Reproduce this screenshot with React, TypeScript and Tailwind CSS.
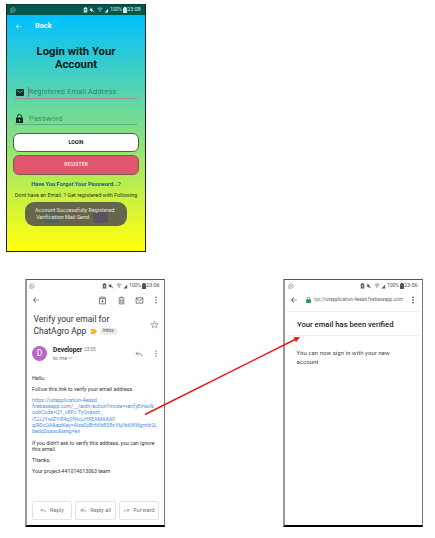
import type { ReactNode } from "react";

function Svg({ className, children, box = "0 0 24 24" }: { className: string; children: ReactNode; box?: string }) {
  return (
    <svg viewBox={box} className={`block shrink-0 ${className}`} fill="currentColor">
      {children}
    </svg>
  );
}

const Whatsapp = ({ className }: { className: string }) => (
  <Svg className={className}>
    <path d="M12 3a9 9 0 0 0-7.700 13.600L3 21l4.500-1.200A9 9 0 1 0 12 3z" fill="none" stroke="currentColor" strokeWidth="2" />
    <path d="M8.500 7.500c-1 1-1 3 2 6s5 3 6 2l-2-2.500-1.500 1c-1-.4-2.500-2-3-3l1-1.500z" />
  </Svg>
);

const Back = ({ className }: { className: string }) => (
  <Svg className={className}>
    <path d="M21 11H6.800l5.600-5.600L11 4l-8 8 8 8 1.400-1.400L6.800 13H21z" />
  </Svg>
);

const Dots = ({ className }: { className: string }) => (
  <Svg className={className} box="8 2 8 20">
    <circle cx="12" cy="5" r="2" />
    <circle cx="12" cy="12" r="2" />
    <circle cx="12" cy="19" r="2" />
  </Svg>
);

const Reply = ({ className }: { className: string }) => (
  <Svg className={className}>
    <path d="M9 5L3 11l6 6M3 11h12q5 0 5 7" fill="none" stroke="currentColor" strokeWidth="2" />
  </Svg>
);

function StatusBar({ className, time }: { className: string; time: string }) {
  return (
    <div className={`flex h-[10px] shrink-0 items-center pr-[4px] ${className}`}>
      <Whatsapp className="size-[6px]" />
      <Svg className="ml-auto h-[6px] w-[5px]" box="2 0 20 24">
        <path fillRule="evenodd" d="M5 4h3V1h8v3h3v18H5zM9 8v3h6V8zM9 14v3h6v-3z" />
      </Svg>
      <Svg className="ml-[1px] size-[6px]">
        <path d="M3 9v6h4l6 5V4L7 9z" />
        <path d="M3 2l18 19" stroke="currentColor" strokeWidth="3" />
      </Svg>
      <Svg className="ml-[2px] size-[6px]">
        <path d="M2 7q10-8 20 0M6 12q6-5 12 0" fill="none" stroke="currentColor" strokeWidth="2.500" />
        <path d="M9 15h6l-3 5z" />
      </Svg>
      <Svg className="ml-[1px] size-[5px]">
        <path d="M2 21L20 3v18z" />
      </Svg>
      <span className="ml-[1px] w-[12px] text-[5.200px] leading-none tracking-[-0.200px]">100%</span>
      <Svg className="ml-[0.500px] h-[6px] w-[4px]" box="0 0 4 6">
        <path d="M0 .8h1V0h2v.8h1V6H0z" />
      </Svg>
      <span className="ml-[0.500px] w-[14px] text-[5.600px] leading-none tracking-[-0.050px]">{time}</span>
    </div>
  );
}

function LoginScreen() {
  return (
    <div className="flex h-[248px] w-[140px] flex-col border-y border-r border-l border-[#222] border-t-[#063d36] bg-linear-to-b/srgb from-[#00bfff] from-4% to-[#ffff10] to-98%">
      <StatusBar className="bg-[#00574b] pl-[3px] text-[#d5ece8]" time="23:08" />
      <div className="flex h-[22px] items-center pl-[8px] text-[#e3fbff]">
        <Back className="size-[7px]" />
        <span className="ml-[13px] text-[7.500px] leading-none font-bold">Back</span>
      </div>
      <h1 className="mt-[8px] text-center text-[11.300px] leading-[13px] font-bold text-[#07191c]">
        Login with Your
        <br />
        Account
      </h1>
      <div className="mt-[14px] ml-[8px] flex h-[14px] w-[122px] items-center border-b border-[#a086a0] pt-[1px]">
        <Svg className="ml-[0.500px] h-[7px] w-[8px] text-[#102b2c]" box="0 0 16 14">
          <path d="M2 0h12q2 0 2 2v10q0 2-2 2H2q-2 0-2-2V2Q0 0 2 0z" />
          <path d="M2 3l6 4 6-4" fill="none" stroke="#4ad4ba" strokeWidth="1.500" />
        </Svg>
        <span className="ml-[4px] h-[10px] w-px bg-[#8a749d]" />
        <span className="text-[7.500px] leading-none tracking-[0.100px] text-[#318279]">Registered Email Address</span>
      </div>
      <div className="mt-[10px] ml-[8px] flex h-[16px] w-[122px] items-center border-b border-[#60ad82] pt-[4px]">
        <Svg className="ml-[1px] h-[9px] w-[7px] text-[#112b20]" box="0 0 14 18">
          <path d="M3 7V5a4 4 0 0 1 8 0v2" fill="none" stroke="currentColor" strokeWidth="2" />
          <path fillRule="evenodd" d="M0 7h14v11H0zM7 11a1.700 1.700 0 1 0 .1 0z" />
        </Svg>
        <span className="ml-[6px] text-[7.500px] leading-none tracking-[0.050px] text-[#438a67]">Password</span>
      </div>
      <div className="mx-[6px] mt-[8px] flex h-[19px] items-center justify-center rounded-[6px] border border-[#47644d] bg-white text-[5.200px] font-bold text-[#222]">
        LOGIN
      </div>
      <div className="mx-[6px] mt-[3px] flex h-[20px] items-center justify-center rounded-[6px] border border-[#7c5a4e] bg-[#e0566f] text-[5.200px] font-medium text-[#ffe1e6]">
        REGISTER
      </div>
      <div className="mt-[4px] text-center text-[5.700px] leading-[10px] font-bold whitespace-nowrap text-[#125e91]">
        Have You Forgot Your Password...?
      </div>
      <div className="mt-[1px] text-center text-[5.500px] leading-[10px] tracking-[-0.040px] whitespace-nowrap text-[#2c3c10]">
        Dont have an Email. ? Get registered with Following
      </div>
      <div className="relative mt-[2px] ml-[18px] flex h-[24px] w-[102px] flex-col justify-center rounded-[9px] bg-[#65674c] pl-[10px] text-[5.500px] leading-[7px] tracking-[-0.020px] whitespace-nowrap text-[#e6e6da]">
        <div className="absolute top-[8px] left-[19px] h-[13px] w-[15px] bg-[#53655b]" />
        <div className="absolute top-[8px] left-[43px] h-[13px] w-[15px] bg-[#6d5f4b]" />
        <div className="absolute top-[8px] left-[68px] h-[13px] w-[15px] bg-[#5c5262]" />
        <span className="relative">Account Successfully Registered</span>
        <span className="relative pl-[1px]">Verification Mail Send</span>
      </div>
    </div>
  );
}

function MailScreen() {
  return (
    <div className="flex h-[248px] w-[140px] flex-col border border-[#777] border-t-[#555] border-b-2 border-b-black bg-white text-[#333] border-l-2 border-l-[#999]">
      <StatusBar className="mt-px pl-[2px] text-[#555]" time="23:06" />
      <div className="mt-[1px] flex h-[16px] items-center pr-[6px] pl-[5px] text-[#555]">
        <Back className="size-[8px]" />
        <Svg className="ml-[58px] size-[9px]">
          <path d="M4 7l2-4h12l2 4v14H4zM4 7h16" fill="none" stroke="currentColor" strokeWidth="2" />
          <path d="M11 9h2v4h3l-4 4-4-4h3z" />
        </Svg>
        <Svg className="ml-[10px] size-[9px]">
          <path d="M6 7v14h12V7M4 5h16M9 3h6M10 9v9M14 9v9" fill="none" stroke="currentColor" strokeWidth="2" />
        </Svg>
        <Svg className="ml-[9px] size-[9px]">
          <path d="M3 5h18v14H3zM3 6l9 7 9-7" fill="none" stroke="currentColor" strokeWidth="2" />
        </Svg>
        <Dots className="ml-auto h-[8px] w-[4px]" />
      </div>
      <div className="mt-[5px] flex pl-[6.500px] text-[8.500px] leading-[12px] whitespace-nowrap text-[#333]">
        <div>
          <div>Verify your email for</div>
          <div className="flex items-center">
            <span>ChatAgro App</span>
            <Svg className="ml-[3.500px] h-[5px] w-[7px] text-[#f5b921]" box="0 0 14 10">
              <path d="M0 0h10l4 5-4 5H0l3-5z" />
            </Svg>
            <span className="ml-[3px] flex h-[7px] w-[17px] items-center justify-center rounded-[2px] bg-[#ececec] text-[4.600px] text-[#555]">Inbox</span>
          </div>
        </div>
        <Svg className="mt-[7px] mr-[5px] ml-auto size-[9px] text-[#777]">
          <path d="M12 3l2.600 6.300 6.900.5-5.300 4.400 1.700 6.800-5.900-3.700L6.100 21l1.700-6.800-5.300-4.400 6.900-.5z" fill="none" stroke="currentColor" strokeWidth="1.600" />
        </Svg>
      </div>
      <div className="mt-[8px] flex h-[17px] items-center pl-[5px]">
        <div className="flex size-[15px] items-center justify-center rounded-full bg-[#b765c7] text-[8.500px] leading-none text-white">D</div>
        <div className="ml-[6px] leading-[8px]">
          <div className="flex items-center">
            <span className="text-[6.500px] font-bold tracking-[-0.020px] text-[#222]">Developer</span>
            <span className="ml-[2px] text-[4.600px] text-[#777]">23:05</span>
          </div>
          <div className="flex items-center text-[5.600px] text-[#777]">
            to me
            <Svg className="ml-[1px] size-[5px]">
              <path d="M4 9l8 7 8-7" fill="none" stroke="currentColor" strokeWidth="3" />
            </Svg>
          </div>
        </div>
        <Reply className="mr-[11px] ml-auto size-[8px] text-[#666]" />
        <Dots className="mr-[6px] h-[7px] w-[4px] text-[#666]" />
      </div>
      <div className="mt-[13px] pl-[5px] text-[5.250px] leading-[7px] whitespace-nowrap text-[#333]">
        <p>Hello,</p>
        <p className="mt-[4px]">Follow this link to verify your email address.</p>
        <p className="mt-[4px] leading-[6.200px] text-[#4d91df]">
          https://iotapplication-4eaad.
          <br />
          <span className="tracking-[-0.030px]">firebaseapp.com/__/auth/action?mode=verifyEmail&amp;</span>
          <br />
          oobCode=Q1_vRFc-TyQvaxzn_
          <br />
          iTJJJYwlZYi84q2f9icLHXEAMAXAF
          <br />
          <span className="tracking-[-0.050px]">qiRDvQA&amp;apiKey=AIzaSyBr6KbB38xV6jiIb6WWgmib2L</span>
          <br />
          6edqDsaxo&amp;lang=en
        </p>
        <p className="mt-[5.500px] leading-[6.500px]">
          If you didn’t ask to verify this address, you can ignore
          <br />
          this email.
        </p>
        <p className="mt-[4px]">Thanks,</p>
        <p className="mt-[4.500px]">Your project-441014613063 team</p>
      </div>
      <div className="mt-auto mb-[5px] flex gap-[3px] pl-[5px] text-[5.800px] leading-none whitespace-nowrap text-[#777]">
        <div className="flex h-[19px] w-[40px] items-center justify-center gap-[3px] rounded-[2px] border border-[#e3e3e3]">
          <Reply className="size-[7px]" />
          Reply
        </div>
        <div className="flex h-[19px] w-[41px] items-center justify-center gap-[3px] rounded-[2px] border border-[#e3e3e3] tracking-[-0.100px]">
          <Svg className="size-[7px]">
            <path d="M7 5l-6 6 6 6M13 5l-6 6 6 6M7 11h9q5 0 5 7" fill="none" stroke="currentColor" strokeWidth="2" />
          </Svg>
          Reply all
        </div>
        <div className="flex h-[19px] w-[40px] items-center justify-center gap-[3px] rounded-[2px] border border-[#e3e3e3]">
          <Reply className="size-[7px] -scale-x-100" />
          Forward
        </div>
      </div>
    </div>
  );
}

function VerifiedScreen() {
  return (
    <div className="flex h-[248px] w-[140px] flex-col border border-[#777] border-t-[#555] border-b-2 border-b-black bg-white text-[#333] border-l-2 border-l-[#999]">
      <StatusBar className="mt-px pl-[3px] text-[#555]" time="23:06" />
      <div className="mt-[1px] flex h-[16px] items-center pr-[7px] pl-[5px]">
        <Back className="size-[8px] text-[#444]" />
        <Svg className="ml-[8px] h-[6px] w-[5px] text-[#29945a]" box="0 0 14 18">
          <path d="M3 7V5a4 4 0 0 1 8 0v2" fill="none" stroke="currentColor" strokeWidth="2" />
          <path d="M0 7h14v11H0z" />
        </Svg>
        <span className="ml-[3px] text-[4.700px] leading-none tracking-[-0.030px] whitespace-nowrap text-[#666]">
          <span className="text-[#4aa675]">tps:</span>//iotapplication-4eaad.firebaseapp.com
        </span>
        <Dots className="ml-auto h-[8px] w-[4px] text-[#222]" />
      </div>
      <div className="mx-px mt-[3px] flex h-[25px] items-center border-y border-[#eeeeee] pt-[3px] pl-[11px] text-[7.650px] leading-none font-medium whitespace-nowrap text-[#222]">
        Your email has been verified
      </div>
      <p className="mt-[12px] pl-[11.500px] text-[5.950px] leading-[9px] tracking-[0.080px] whitespace-nowrap text-[#444]">
        You can now sign in with your new
        <br />
        account
      </p>
    </div>
  );
}

export default function App() {
  return (
    <main className="relative flex h-[538px] w-[435px] flex-col overflow-hidden bg-white pt-[4px] font-['Roboto',sans-serif]">
      <div className="pl-[6px]">
        <LoginScreen />
      </div>
      <div className="mt-[27px] flex gap-[118px] pl-[25px]">
        <MailScreen />
        <VerifiedScreen />
      </div>
      <svg className="pointer-events-none absolute inset-0 size-full" viewBox="0 0 435 538">
        <path d="M145 414.500L295 339.500" stroke="#ec1717" strokeWidth="1.500" />
        <path d="M300 337l-6.500 0.300 2.500 5z" fill="#ec1717" />
      </svg>
    </main>
  );
}
